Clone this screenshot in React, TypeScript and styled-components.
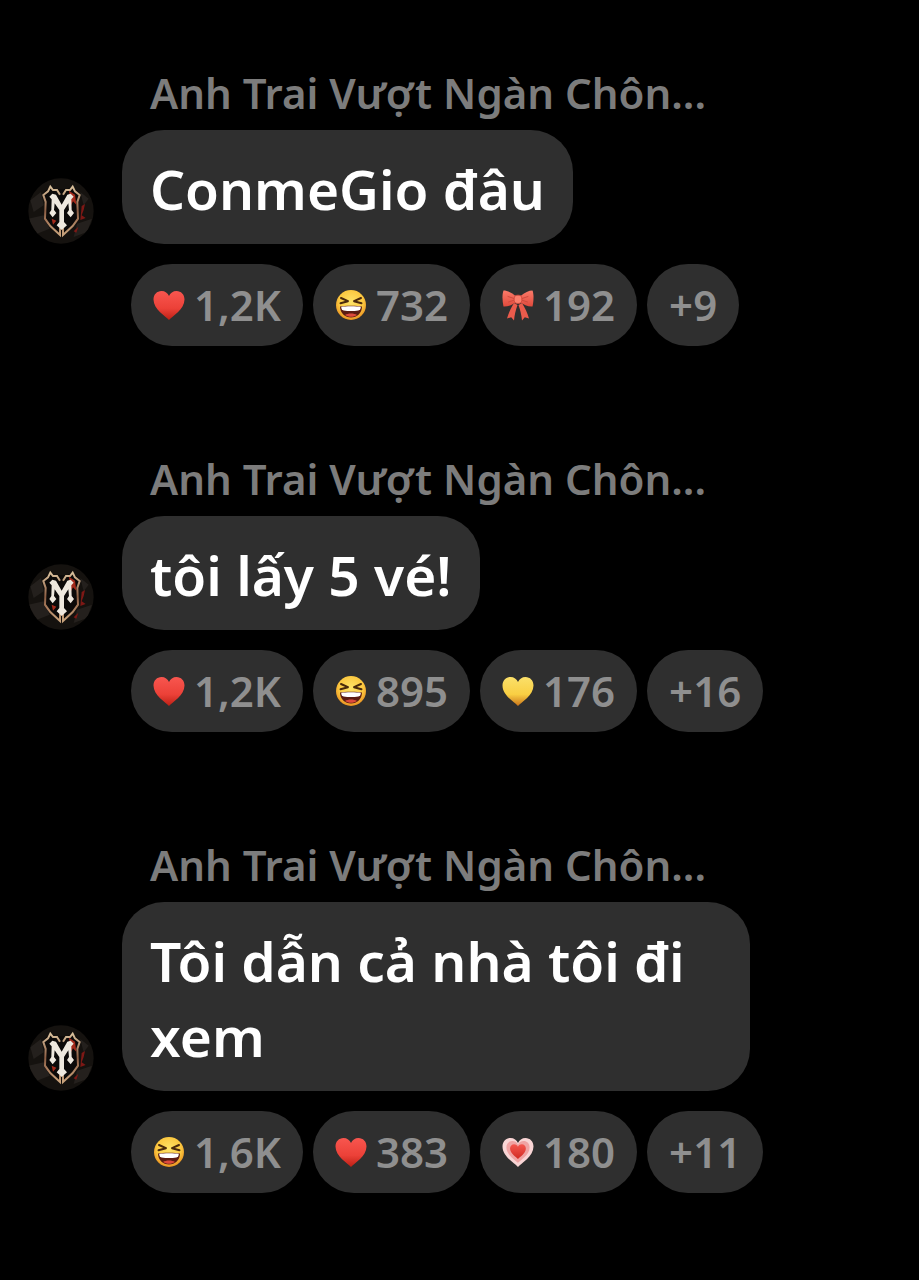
import React, { useId } from "react";
import styled, { createGlobalStyle } from "styled-components";

const GlobalStyle = createGlobalStyle`
  *, *::before, *::after { box-sizing: border-box; }
  html, body { margin: 0; background: #000; }
  body { font-family: "Noto Sans", "Open Sans", sans-serif; }
`;

const Thread = styled.main`
  display: flex;
  flex-direction: column;
  gap: 104px;
  min-height: 100vh;
  padding: 64px 28px;
  background: #000;
`;

const MessageGroup = styled.article`
  display: flex;
  flex-direction: column;
`;

const Sender = styled.h2`
  margin: 0 0 8px;
  padding-left: 122px;
  font-size: 42px;
  font-weight: 600;
  line-height: 58px;
  color: #7c7c7c;
  white-space: nowrap;
`;

const BubbleRow = styled.div`
  display: flex;
  align-items: flex-end;
  gap: 28px;
`;

const AvatarArt = styled.svg`
  flex: none;
  width: 66px;
  height: 66px;
`;

const Bubble = styled.p`
  margin: 0;
  max-width: 628px;
  padding: 21px 28px 18px;
  border-radius: 42px;
  background: #2f2f2f;
  color: #fff;
  font-size: 55px;
  font-weight: 600;
  line-height: 75px;
`;

const Reactions = styled.div`
  display: flex;
  flex-wrap: wrap;
  gap: 10px;
  margin-top: 20px;
  padding-left: 103px;
`;

const Chip = styled.button`
  display: flex;
  align-items: center;
  gap: 9px;
  height: 82px;
  padding: 0 22px;
  border: 0;
  border-radius: 41px;
  background: #2f2f2f;
  color: #8f8f8f;
  font: inherit;
  font-size: 42px;
  font-weight: 600;
  line-height: 58px;
  cursor: pointer;
`;

const Emoji = styled.svg`
  flex: none;
  width: 32px;
  height: 32px;
`;

const HEART =
  "M16 31C13 27.5 0.5 20.5 0.5 10.5C0.5 5.5 4 2 8.5 2C12 2 14.8 4 16 7C17.2 4 20 2 23.5 2C28 2 31.5 5.5 31.5 10.5C31.5 20.5 19 27.5 16 31Z";

type EmojiKind = "red" | "yellow" | "growing" | "laugh" | "bow";

const EMOJI_LABELS: Record<EmojiKind, string> = {
  red: "Trái tim đỏ",
  yellow: "Trái tim vàng",
  growing: "Trái tim lớn dần",
  laugh: "Cười",
  bow: "Nơ",
};

function EmojiIcon({ kind }: { kind: EmojiKind }) {
  const id = useId();
  const fill = `url(#${id})`;
  if (kind === "red" || kind === "yellow") {
    const [top, mid, low] =
      kind === "red" ? ["#f8564f", "#ec4138", "#bd2015"] : ["#fbe06a", "#f9cf43", "#c9731a"];
    return (
      <Emoji viewBox="0 0 32 32" role="img" aria-label={EMOJI_LABELS[kind]}>
        <linearGradient id={id} x1="0" y1="0" x2="0" y2="1">
          <stop offset="0" stopColor={top} />
          <stop offset="0.6" stopColor={mid} />
          <stop offset="1" stopColor={low} />
        </linearGradient>
        <path d={HEART} fill={fill} />
      </Emoji>
    );
  }
  if (kind === "growing") {
    return (
      <Emoji viewBox="0 0 32 32" role="img" aria-label={EMOJI_LABELS[kind]}>
        <linearGradient id={id} x1="0" y1="0" x2="0" y2="1">
          <stop offset="0" stopColor="#f4574f" />
          <stop offset="1" stopColor="#d12a22" />
        </linearGradient>
        <path d={HEART} fill="#f9d5d5" />
        <path d={HEART} fill="#f0a3a3" transform="translate(4 3.6) scale(0.75)" />
        <path d={HEART} fill={fill} transform="translate(7.8 7.2) scale(0.51)" />
      </Emoji>
    );
  }
  if (kind === "laugh") {
    return (
      <Emoji viewBox="0 0 32 32" role="img" aria-label={EMOJI_LABELS[kind]}>
        <radialGradient id={id} cx="0.5" cy="0.4" r="0.62">
          <stop offset="0" stopColor="#fee468" />
          <stop offset="0.65" stopColor="#fbc840" />
          <stop offset="1" stopColor="#e88a1c" />
        </radialGradient>
        <circle cx="16" cy="16" r="15" fill={fill} />
        <path d="M5 17.5C9 16.5 23 16.5 27 17.5C27 24 22 28.500 16 28.500S5 24 5 17.500Z" fill="#5c1c12" />
        <path d="M6.2 17.8C10 17 22 17 25.8 17.8C25.8 20 25 21.200 23.4 21.500C18.5 22.200 13.5 22.200 8.6 21.500C7 21.200 6.2 20 6.2 17.8Z" fill="#fff" />
        <path d="M10 26C13 24 19 24 22 26C18.500 28.400 13.500 28.400 10 26Z" fill="#dd4a3c" />
        <path
          d="M6 9L13 12.200L5.500 14.200M26 9L19 12.200L26.500 14.200"
          fill="none"
          stroke="#4a2a0c"
          strokeWidth="2"
          strokeLinecap="round"
          strokeLinejoin="round"
        />
      </Emoji>
    );
  }
  return (
    <Emoji viewBox="0 0 32 32" role="img" aria-label={EMOJI_LABELS.bow}>
      <linearGradient id={id} x1="0" y1="0" x2="0" y2="1">
        <stop offset="0" stopColor="#fb7a69" />
        <stop offset="1" stopColor="#e04a3c" />
      </linearGradient>
      <path d="M12 14C9 19 6.500 24 5 29.500L9.200 28.200L12 31.500C12.500 26 13.800 21 15.500 16Z" fill="#ea5b4c" />
      <path d="M20 14C23 19 25.500 24 27 29.500L22.800 28.200L20 31.500C19.500 26 18.200 21 16.500 16Z" fill="#ea5b4c" />
      <path d="M13.500 7C9.500 3.500 5 1.500 1.500 1.500C0 5.500 0.300 12 1.500 17.500C6 17.800 10.500 15.800 14 13Z" fill={fill} />
      <path d="M18.500 7C22.500 3.500 27 1.500 30.500 1.500C32 5.500 31.700 12 30.500 17.500C26 17.800 21.500 15.800 18 13Z" fill={fill} />
      <path d="M6 7.500L12 9.500M6.500 13L12 11.200M26 7.500L20 9.500M25.500 13L20 11.200" stroke="#cf4a3e" strokeWidth="1" strokeLinecap="round" />
      <rect x="12.200" y="6.200" width="7.600" height="8.200" rx="2.800" fill="#fc7f6d" stroke="#cf4539" strokeWidth="0.800" />
    </Emoji>
  );
}

function Avatar() {
  const id = useId();
  return (
    <AvatarArt viewBox="23 28 198 198" role="img" aria-label="Ảnh đại diện">
      <defs>
        <clipPath id={`${id}c`}>
          <circle cx="122" cy="127" r="98" />
        </clipPath>
        <linearGradient id={`${id}g`} x1="0" y1="0" x2="0" y2="1">
          <stop offset="0" stopColor="#d9c09c" />
          <stop offset="0.500" stopColor="#8d5e44" />
          <stop offset="1" stopColor="#c9a37c" />
        </linearGradient>
      </defs>
      <g clipPath={`url(#${id}c)`}>
        <rect x="23" y="28" width="198" height="198" fill="#15120f" />
        <path d="M30 95L62 70L70 110L40 130ZM24 150L70 140L88 180L50 195ZM170 165L215 150L200 190L160 205ZM180 70L205 90L190 110Z" fill="#24201d" />
        <path d="M184 112L194 106L190 124L184 140L196 148L180 154ZM72 152L92 150L84 168ZM160 188L174 174L168 192Z" fill="#7d1815" />
        <path d="M90 52L68 74L76 100L72 150L122 200L174 150L171 100L178 74L156 52L140 62L104 62Z" fill="#0c0a09" />
        <g fill="none" stroke={`url(#${id}g)`} strokeWidth="6" strokeLinejoin="miter">
          <path d="M119 78L110 64L98 64L90 54L83 68L69 79L76 100L74 150L90 172L119 199L119 178" />
          <path d="M128 78L137 64L149 64L157 54L164 68L178 79L171 100L173 150L157 172L128 199L128 178" />
        </g>
        <path d="M146 66L164 78L168 108L158 98L152 110ZM94 150L108 156L98 168Z" fill="#a32a1b" />
        <path
          d="M87 84L96 75L107 78L124 108L141 78L151 75L160 84L153 92L154 124L161 133L151 146L140 133L146 124L144 104L131 124L131 160L140 170L124 184L109 170L117 160L117 124L103 104L101 124L108 133L97 146L87 133L93 124L94 92Z"
          fill="#eee8de"
        />
      </g>
    </AvatarArt>
  );
}

interface Message {
  text: string;
  reactions: { kind: EmojiKind; count: string }[];
  more: string;
}

const SENDER = "Anh Trai Vượt Ngàn Chôn...";

const MESSAGES: Message[] = [
  {
    text: "ConmeGio đâu",
    reactions: [
      { kind: "red", count: "1,2K" },
      { kind: "laugh", count: "732" },
      { kind: "bow", count: "192" },
    ],
    more: "+9",
  },
  {
    text: "tôi lấy 5 vé!",
    reactions: [
      { kind: "red", count: "1,2K" },
      { kind: "laugh", count: "895" },
      { kind: "yellow", count: "176" },
    ],
    more: "+16",
  },
  {
    text: "Tôi dẫn cả nhà tôi đi xem",
    reactions: [
      { kind: "laugh", count: "1,6K" },
      { kind: "red", count: "383" },
      { kind: "growing", count: "180" },
    ],
    more: "+11",
  },
];

export default function App() {
  return (
    <>
      <GlobalStyle />
      <Thread>
        {MESSAGES.map((message) => (
          <MessageGroup key={message.text}>
            <Sender>{SENDER}</Sender>
            <BubbleRow>
              <Avatar />
              <Bubble>{message.text}</Bubble>
            </BubbleRow>
            <Reactions>
              {message.reactions.map(({ kind, count }) => (
                <Chip type="button" key={kind}>
                  <EmojiIcon kind={kind} />
                  {count}
                </Chip>
              ))}
              <Chip type="button">{message.more}</Chip>
            </Reactions>
          </MessageGroup>
        ))}
      </Thread>
    </>
  );
}
